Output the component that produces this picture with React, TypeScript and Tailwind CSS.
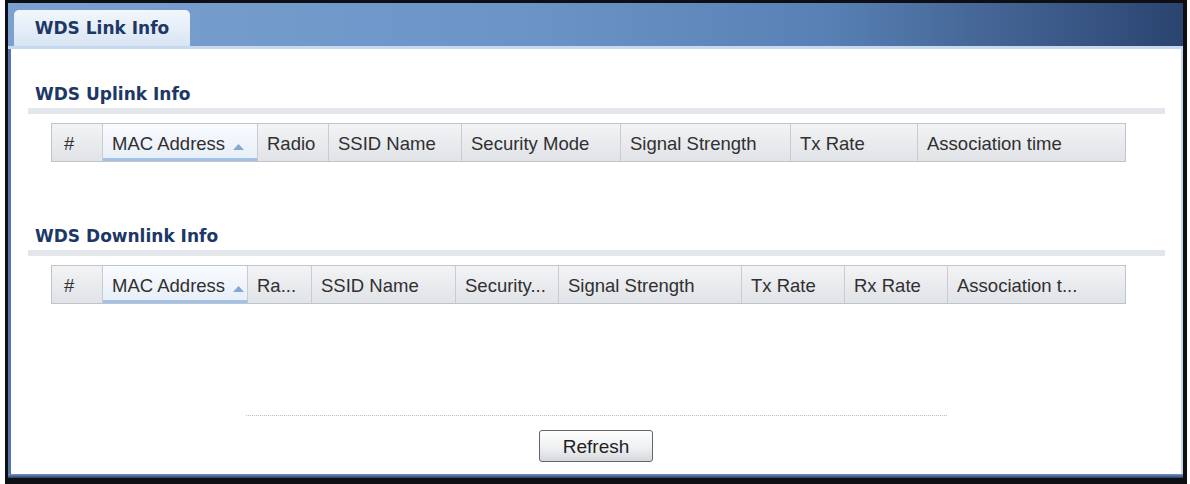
import React from "react";

type Col = { label: string; w: number; sorted?: boolean; pl?: number };

const uplinkCols: Col[] = [
  { label: "#", w: 52, pl: 12 },
  { label: "MAC Address", w: 155, sorted: true },
  { label: "Radio", w: 71 },
  { label: "SSID Name", w: 133 },
  { label: "Security Mode", w: 159 },
  { label: "Signal Strength", w: 170 },
  { label: "Tx Rate", w: 127 },
  { label: "Association time", w: 208 },
];

const downlinkCols: Col[] = [
  { label: "#", w: 52, pl: 12 },
  { label: "MAC Address", w: 145, sorted: true },
  { label: "Ra...", w: 64 },
  { label: "SSID Name", w: 144 },
  { label: "Security...", w: 103 },
  { label: "Signal Strength", w: 183 },
  { label: "Tx Rate", w: 103 },
  { label: "Rx Rate", w: 103 },
  { label: "Association t...", w: 178 },
];

function SortArrow() {
  return (
    <svg width="11" height="6" viewBox="0 0 11 6" className="ml-[8px] mt-[6px]">
      <polygon points="0,6 5.5,0 11,6" fill="#86a7cf" />
    </svg>
  );
}

function HeaderRow({ cols }: { cols: Col[] }) {
  return (
    <div className="ml-[40px] flex h-[39px] w-[1075px] border border-[#bfc3ca]">
      {cols.map((c, i) => (
        <div
          key={i}
          style={{ width: c.w - (i === 0 ? 1 : 0) - (i === cols.length - 1 ? 1 : 0), paddingLeft: c.pl ?? 9 }}
          className={
            "flex items-center whitespace-nowrap overflow-hidden pt-[3px] text-[18.5px] leading-none text-[#303030] " +
            (i < cols.length - 1 ? "border-r border-[#c8ccd2] " : "") +
            (c.sorted
              ? "bg-[linear-gradient(#f9fbfe,#e8eff8)] border-b-[3px] border-b-[#a2c1e6] pt-[6px]"
              : "bg-[linear-gradient(#f2f3f5,#e0e3e7)]")
          }
        >
          <span>{c.label}</span>
          {c.sorted && <SortArrow />}
        </div>
      ))}
    </div>
  );
}

function Section({ title, cols, top }: { title: string; cols: Col[]; top: number }) {
  return (
    <div style={{ marginTop: top }}>
      <div
        className="ml-[24px] h-[20px] text-[17px] leading-[20px] font-bold text-[#1d3766]"
        style={{ fontFamily: '"DejaVu Sans", Verdana, sans-serif' }}
      >
        {title}
      </div>
      <div className="ml-[17px] mt-[4px] h-[6px] w-[1137px] bg-[#e3e6eb]" />
      <div className="mt-[9px]">
        <HeaderRow cols={cols} />
      </div>
    </div>
  );
}

export default function App() {
  return (
    <div
      className="w-[1190px] h-[484px] bg-white overflow-hidden"
      style={{ fontFamily: '"Liberation Sans", Arial, sans-serif' }}
    >
      <div className="ml-[5px] w-[1182px] h-[484px] border-t-[3px] border-l-[3px] border-r-[4px] border-b-[6px] border-[#0e0f12] flex flex-col">
        <div className="h-[43px] flex items-end pl-[6px] bg-[linear-gradient(to_right,#7aa1d0_0%,#6b93c6_45%,#5880b4_70%,#2b4470_100%)]">
          <div
            className="w-[176px] h-[36px] rounded-t-[5px] bg-[linear-gradient(#f3f7fc,#d8e5f4)] flex items-center justify-center text-[17px] leading-[20px] font-bold text-[#1d3766]"
            style={{ fontFamily: '"DejaVu Sans", Verdana, sans-serif' }}
          >
            WDS Link Info
          </div>
        </div>
        <div className="h-[3px] bg-[#c7d9ee]" />
        <div className="flex-1 flex flex-col border-l-[3px] border-l-[#5675ab] border-r-[2px] border-r-[#c9d6e8] bg-white">
          <Section title="WDS Uplink Info" cols={uplinkCols} top={35} />
          <Section title="WDS Downlink Info" cols={downlinkCols} top={64} />
          <div className="mx-auto mt-[111px] w-[701px] border-t border-dotted border-[#bdbdbd]" />
          <button className="mx-auto mt-[14px] w-[114px] h-[32px] rounded-[3px] border border-[#5f6671] bg-[linear-gradient(#fefefe,#eceef0_60%,#d6d9dd)] text-[19px] leading-none text-[#1f1f1f]">
            Refresh
          </button>
        </div>
        <div className="h-[4px] bg-[linear-gradient(#7696c8,#2a3f66)]" />
      </div>
    </div>
  );
}
